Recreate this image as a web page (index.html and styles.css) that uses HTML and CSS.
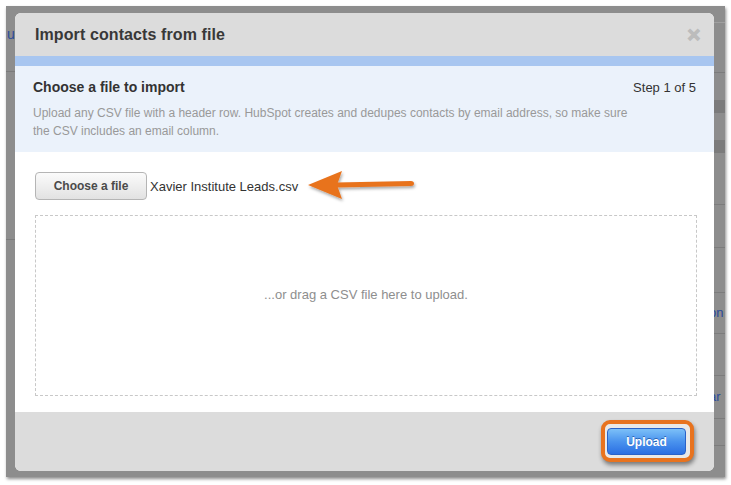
FILE: index.html
```html
<!DOCTYPE html>
<html>
<head>
<meta charset="utf-8">
<link rel="stylesheet" href="styles.css">
</head>
<body>
<div class="frame">
  <div class="backdrop">
    <div class="strip strip-left">
      <div class="bg-link">u</div>
      <div class="bg-row r1"></div>
      <div class="bg-row r2"></div>
    </div>
    <div class="modal">
      <div class="modal-header">
        <h1 class="modal-title">Import contacts from file</h1>
        <span class="close">&#x2715;</span>
      </div>
      <div class="stripe"></div>
      <div class="intro">
        <div class="intro-top">
          <h2 class="intro-title">Choose a file to import</h2>
          <span class="step">Step 1 of 5</span>
        </div>
        <p class="intro-desc">Upload any CSV file with a header row. HubSpot creates and dedupes contacts by email address, so make sure the CSV includes an email column.</p>
      </div>
      <div class="modal-body">
        <div class="file-row">
          <button class="choose-btn">Choose a file</button>
          <span class="file-name">Xavier Institute Leads.csv</span>
          <svg class="arrow" width="112" height="36" viewBox="0 0 112 36">
            <defs>
              <filter id="sh" x="-10%" y="-30%" width="130%" height="170%">
                <feDropShadow dx="1" dy="2" stdDeviation="1.5" flood-color="#000" flood-opacity="0.35"/>
              </filter>
            </defs>
            <g filter="url(#sh)">
              <path d="M30 14.5 L105 13 Q108 13 108 15.5 Q108 18 105 18 L30 19.5 Z" fill="#e8731f"/>
              <path d="M2 17 L36 3 L31 17 L36 31 Z" fill="#e8731f"/>
            </g>
          </svg>
        </div>
        <div class="dropzone">...or drag a CSV file here to upload.</div>
      </div>
      <div class="modal-footer">
        <div class="highlight">
          <button class="upload-btn">Upload</button>
        </div>
      </div>
    </div>
    <div class="strip strip-right">
      <div class="rr l22"></div>
      <div class="rr l72"></div>
      <div class="rr band1"></div>
      <div class="rr band2"></div>
      <div class="rr l204"></div>
      <div class="rr l247"></div>
      <div class="rr l292"></div>
      <div class="rr txt t1">on</div>
      <div class="rr l375"></div>
      <div class="rr txt t2">ar</div>
      <div class="rr l445"></div>
    </div>
  </div>
</div>
</body>
</html>
```

FILE: styles.css
```css
* { box-sizing: border-box; }
html, body { margin: 0; padding: 0; }
body {
  background: #ffffff;
  font-family: "Liberation Sans", Arial, Helvetica, sans-serif;
  width: 731px;
  height: 485px;
  overflow: hidden;
}
.frame {
  padding: 6px 0 0 6px;
}
.backdrop {
  width: 719px;
  height: 471px;
  background: #8d8d8d;
  display: flex;
  box-shadow: 1px 2px 3px rgba(0,0,0,0.45);
}
.strip { position: relative; }
.strip-left {
  width: 9px;
  display: flex;
  flex-direction: column;
}
.bg-link {
  margin-top: 20px;
  color: #2a4a9a;
  font-size: 14px;
  line-height: 16px;
  padding-left: 1px;
}
.bg-row { border-bottom: 1px solid #7b7b7b; }
.bg-row.r1 { height: 30px; }
.bg-row.r2 { height: 168px; }

.modal {
  margin-top: 7px;
  width: 699px;
  height: 458px;
  border-radius: 6px;
  overflow: hidden;
  display: flex;
  flex-direction: column;
  background: #fff;
}
.modal-header {
  height: 43px;
  background: #dcdcdc;
  display: flex;
  align-items: center;
  justify-content: space-between;
  padding: 0 13px 0 20px;
}
.modal-title {
  margin: 0;
  font-size: 16px;
  font-weight: bold;
  color: #383838;
  letter-spacing: 0.1px;
}
.close {
  color: #bcbcbc;
  font-size: 17px;
  line-height: 18px;
  font-weight: bold;
  font-family: "DejaVu Sans", sans-serif;
  -webkit-text-stroke: 2px #bcbcbc;
}
.stripe {
  height: 10px;
  background: #a8c6f0;
}
.intro {
  height: 86px;
  background: #ebf2fb;
  padding: 12px 18px 0 18px;
}
.intro-top {
  display: flex;
  justify-content: space-between;
  align-items: baseline;
}
.intro-title {
  margin: 0;
  font-size: 14px;
  font-weight: bold;
  color: #333;
  line-height: 18px;
}
.step {
  font-size: 13px;
  color: #333;
}
.intro-desc {
  margin: 8px 0 0 0;
  width: 606px;
  font-size: 12px;
  line-height: 18px;
  color: #999;
}
.modal-body {
  height: 260px;
  padding: 20px 17px 16px 20px;
  display: flex;
  flex-direction: column;
}
.file-row {
  display: flex;
  align-items: center;
  height: 28px;
}
.choose-btn {
  width: 112px;
  height: 28px;
  border: 1px solid #b5b5b5;
  border-radius: 4px;
  background: linear-gradient(#fbfbfb, #e2e2e2);
  color: #4a4a4a;
  font-family: "Liberation Sans", Arial, sans-serif;
  font-size: 12px;
  font-weight: bold;
  padding: 0 0 1px 0;
}
.file-name {
  margin-left: 3px;
  font-size: 13px;
  color: #333;
}
.arrow {
  margin-left: 8px;
  flex: none;
}
.dropzone {
  margin-top: 15px;
  flex: 1;
  border: 1px dashed #c8c8c8;
  display: flex;
  align-items: center;
  justify-content: center;
  font-size: 13px;
  color: #8e8e8e;
  padding-bottom: 22px;
}
.modal-footer {
  flex: 1;
  background: #dcdcdc;
  display: flex;
  justify-content: flex-end;
  align-items: flex-start;
  padding: 8px 20px 0 0;
}
.highlight {
  width: 93px;
  height: 42px;
  border: 4px solid #e8731f;
  border-radius: 9px;
  background: #e9e9e9;
  padding: 4px 4px 3px 2px;
  box-shadow: 1px 3px 4px rgba(0,0,0,0.45);
}
.upload-btn {
  width: 79px;
  height: 27px;
  border: 1px solid #2a62c8;
  border-radius: 4px;
  background: linear-gradient(#7cc0f8, #4a93ee 50%, #2b6fe3);
  color: #fff;
  font-family: "Liberation Sans", Arial, sans-serif;
  font-size: 12px;
  font-weight: bold;
  text-shadow: 0 -1px 0 rgba(0,40,120,0.5);
  padding: 0;
}
.strip-right {
  flex: 1;
  display: flex;
  flex-direction: column;
  overflow: hidden;
}
.rr { border-bottom: 1px solid #7c7c7c; flex: none; }
.l22 { height: 17px; border-color: #a0a0a0; }
.l72 { height: 50px; }
.band1 { height: 40px; border-bottom: 13px solid #7b7b7b; }
.band2 { height: 40px; border-bottom: 13px solid #7b7b7b; }
.l204 { height: 52px; }
.l247 { height: 43px; }
.l292 { height: 45px; }
.txt {
  color: #2a4a9a;
  font-size: 13px;
  margin-left: -5px;
  white-space: nowrap;
  overflow: hidden;
}
.t1 { height: 41px; line-height: 40px; }
.l375 { height: 42px; }
.t2 { height: 43px; line-height: 42px; }
.l445 { height: 27px; }
```
